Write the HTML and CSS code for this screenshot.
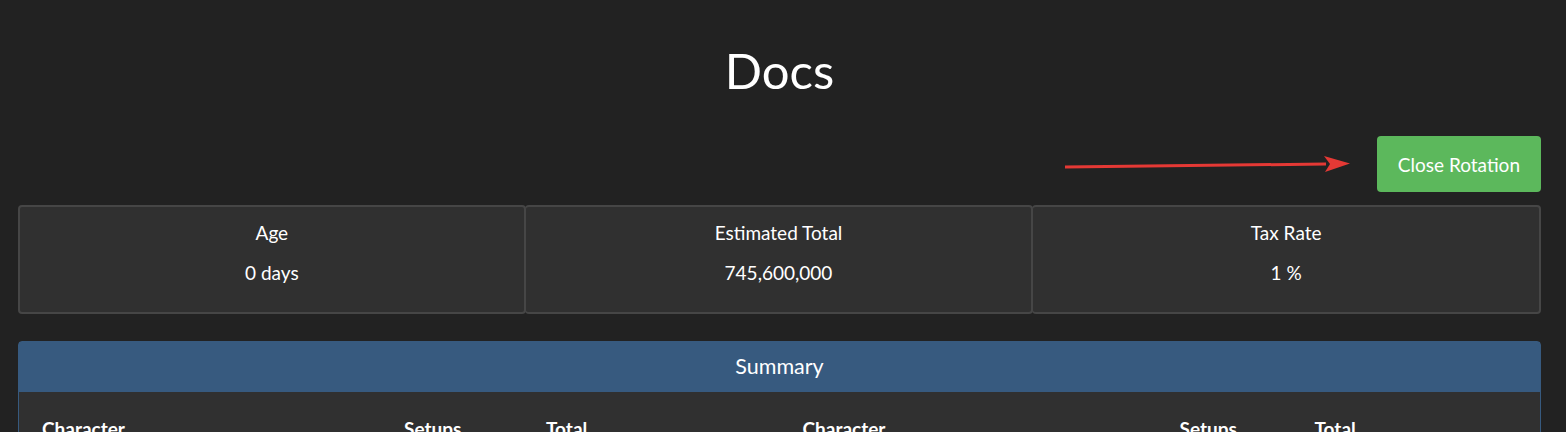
FILE: index.html
```html
<!DOCTYPE html>
<html lang="en">
<head>
<meta charset="utf-8">
<title>Docs</title>
<link rel="stylesheet" href="styles.css">
</head>
<body>
<div class="page">
  <h1 class="title">Docs</h1>
  <div class="actions">
    <svg class="arrow" width="300" height="24" viewBox="0 0 300 24">
      <path d="M1 14 L262 11" stroke="#e53935" stroke-width="3" fill="none"/>
      <path d="M260 3 L286 10.5 L261 19 L266 11 Z" fill="#e53935"/>
    </svg>
    <button class="btn-success">Close Rotation</button>
  </div>
  <div class="stats">
    <div class="stat">
      <div class="stat-label">Age</div>
      <div class="stat-value">0 days</div>
    </div>
    <div class="stat">
      <div class="stat-label">Estimated Total</div>
      <div class="stat-value">745,600,000</div>
    </div>
    <div class="stat">
      <div class="stat-label">Tax Rate</div>
      <div class="stat-value">1 %</div>
    </div>
  </div>
  <div class="panel">
    <div class="panel-heading">Summary</div>
    <div class="panel-body">
      <div class="summary-table left">
        <div class="th">Character</div>
        <div class="th">Setups</div>
        <div class="th">Total</div>
      </div>
      <div class="summary-table right">
        <div class="th">Character</div>
        <div class="th">Setups</div>
        <div class="th">Total</div>
      </div>
    </div>
  </div>
</div>
</body>
</html>
```

FILE: styles.css
```css
html, body {
  margin: 0;
  padding: 0;
  background: #222222;
  color: #ffffff;
  font-family: Lato, "Liberation Sans", sans-serif;
}
.page {
  padding: 0 25px 0 18px;
}
.title {
  margin: 0;
  padding-top: 40px;
  height: 96px;
  box-sizing: border-box;
  text-align: center;
  font-weight: 400;
  font-size: 49px;
  line-height: 60px;
}
.actions {
  display: flex;
  justify-content: flex-end;
  align-items: center;
  height: 56px;
  margin-top: 40px;
  margin-bottom: 13px;
  position: relative;
}
.arrow {
  position: absolute;
  left: 1046px;
  top: 17px;
}
.btn-success {
  background: #5cb85c;
  color: #ffffff;
  border: none;
  border-radius: 4px;
  height: 56px;
  padding: 0 21px;
  font-family: Lato, "Liberation Sans", sans-serif;
  font-size: 19px;
}
.stats {
  display: grid;
  grid-template-columns: 1fr 1fr 1fr;
  height: 109px;
  box-sizing: border-box;
}
.stat {
  background: #303030;
  border: 2px solid #464646;
  border-radius: 4px;
  display: flex;
  flex-direction: column;
  align-items: center;
  padding-top: 15px;
  font-size: 19px;
}
.stat + .stat {
  border-left-width: 1px;
  margin-left: -1px;
}
.stat-label {
  line-height: 22px;
}
.stat-value {
  margin-top: 18px;
  line-height: 22px;
}
.panel {
  margin-top: 27px;
  border: 1px solid #375a7f;
  border-radius: 4px;
  background: #303030;
}
.panel-heading {
  background: #375a7f;
  height: 50px;
  display: flex;
  align-items: center;
  justify-content: center;
  font-size: 21.5px;
  padding-bottom: 2px;
  box-sizing: border-box;
}
.panel-body {
  display: grid;
  grid-template-columns: 1fr 1fr;
  padding: 25px 0 20px;
}
.summary-table {
  display: grid;
  padding-left: 23px;
  font-weight: 700;
  font-size: 19px;
}
.summary-table.left {
  grid-template-columns: 362px 142px 1fr;
}
.summary-table.right {
  grid-template-columns: 377px 135px 1fr;
}
```
